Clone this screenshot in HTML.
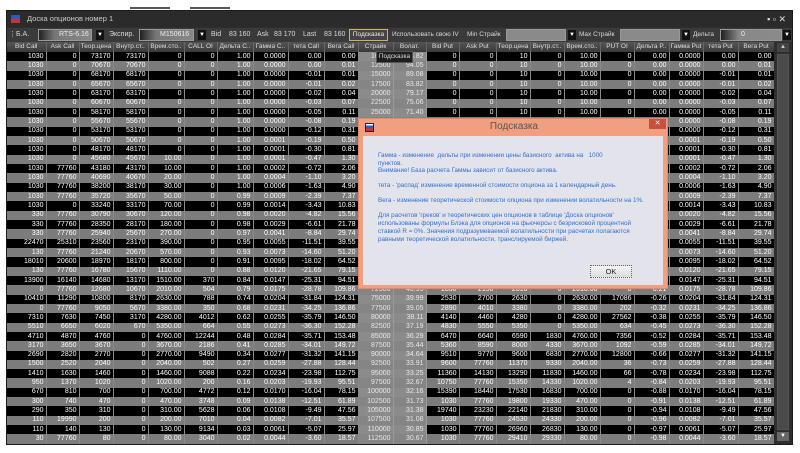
<!DOCTYPE html>
<html><head><meta charset="utf-8">
<style>
*{margin:0;padding:0;box-sizing:border-box}
body{width:800px;height:453px;background:#fff;position:relative;overflow:hidden;font-family:"Liberation Sans","DejaVu Sans",sans-serif}
#win{position:absolute;left:6px;top:10px;width:787px;height:435px;background:#2e2e2e;border:1px solid #1a1a1a}
.abs{position:absolute}
#title{left:0;top:0;width:785px;height:16px;background:#2b2b2b;color:#ccc;font-size:7.5px;line-height:16px;padding-left:20px}
#tb{left:0;top:17px;width:785px;height:14px;background:#3a3a3a;color:#d8d8d8;font-size:7px;line-height:14px}
.lbl{position:absolute;top:0;white-space:nowrap}
.combo{position:absolute;top:1px;height:12px;background:linear-gradient(90deg,#222,#777 30%,#888);border:1px solid #999;color:#eee;font-size:7px;line-height:10px;padding-left:20px}
.arr{position:absolute;top:2px;width:8px;height:10px;background:#111;color:#fff;font-size:6px;line-height:10px;text-align:center}
table{position:absolute;left:0;top:31px;border-collapse:collapse;table-layout:fixed;width:767px}
tr{height:9.33px}
tr.h{height:10px}
th{height:10px;padding:0;background:linear-gradient(#555,#3a3a3a);color:#ddd;font-weight:normal;font-size:6.5px;line-height:8px;border-right:1px solid #666;overflow:hidden;white-space:nowrap;text-align:center}
td{height:9.33px;max-height:9.33px;font-size:7px;line-height:8px;text-align:right;padding:0 2px 0 0;color:#fff;border-right:1px solid #8a8a8a;overflow:hidden;white-space:nowrap}
tr.b td{background:#000}
tr.g td{background:#7c7c7c}
tr td.s{background:#8b8b8b;color:#e8e8e8;border-right:1px solid #9a9a9a}
tr.g td.s{background:#858585}
#sb{left:767px;top:31px;width:18px;height:402px;background:#2e2e2e}
#dlg{position:absolute;left:358px;top:118px;width:310px;height:171px;background:#f0a080;border:1px solid #e08a6a}
#dlgin{position:absolute;left:4px;top:17px;width:300px;height:149px;background:#e3e3eb}
#dlg p{position:absolute;left:15px;color:#2e6fd0;font-size:6.3px;line-height:8px;white-space:nowrap}
</style></head><body>
<div style="position:absolute;left:130px;top:7px;width:40px;height:2px;background:#555"></div>
<div style="position:absolute;left:190px;top:7px;width:40px;height:2px;background:#555"></div>
<div id="win">
 <div id="title" class="abs"><span style="position:absolute;left:4px;top:4px;width:9px;height:8px;background:linear-gradient(#2a5acc 50%,#d03030 50%)"></span>Доска опционов номер 1<span style="position:absolute;right:6px;top:0;color:#ddd;font-size:9px">▪ ▫ ✕</span></div>
 <div id="tb" class="abs">
  <span class="lbl" style="left:2px">⋮</span>
  <span class="lbl" style="left:9px">Б.А.</span>
  <div class="combo" style="left:31px;width:54px">RTS-6.16</div><div class="arr" style="left:89px">▼</div>
  <span class="lbl" style="left:102px">Экспир.</span>
  <div class="combo" style="left:132px;width:55px">M150616</div><div class="arr" style="left:191px">▼</div>
  <span class="lbl" style="left:204px">Bid</span><span class="lbl" style="left:222px">83 160</span>
  <span class="lbl" style="left:250px">Ask</span><span class="lbl" style="left:267px">83 170</span>
  <span class="lbl" style="left:296px">Last</span><span class="lbl" style="left:317px">83 160</span>
  <div class="abs" style="left:342px;top:1px;width:39px;height:12px;border:1px solid #d4b060;background:#444;color:#eed;font-size:6.5px;line-height:10px;text-align:center">Подсказка</div>
  <span class="lbl" style="left:385px;font-size:6.5px">Использовать свою IV</span>
  <span class="lbl" style="left:460px;font-size:6.5px">Min Страйк</span>
  <div class="combo" style="left:499px;width:60px;background:#8a8a8a"></div><div class="arr" style="left:561px">▼</div>
  <span class="lbl" style="left:572px;font-size:6.5px">Max Страйк</span>
  <div class="combo" style="left:613px;width:60px;background:#8a8a8a"></div><div class="arr" style="left:675px">▼</div>
  <span class="lbl" style="left:686px;font-size:6.5px">Дельта</span>
  <div class="combo" style="left:713px;width:62px;background:linear-gradient(90deg,#222,#888 30%,#8a8a8a)">0</div><div class="arr" style="left:776px">▼</div>
 </div>
 <table>
 <colgroup><col style="width:39px"><col style="width:33px"><col style="width:34px"><col style="width:35px"><col style="width:36px"><col style="width:33px"><col style="width:36px"><col style="width:35px"><col style="width:36px"><col style="width:34px"><col style="width:35px"><col style="width:33px"><col style="width:33px"><col style="width:37px"><col style="width:34px"><col style="width:34px"><col style="width:36px"><col style="width:34px"><col style="width:35px"><col style="width:34px"><col style="width:35px"><col style="width:36px"></colgroup>
 <tr class="h"><th>Bid Call</th><th>Ask Call</th><th>Теор.цена</th><th>Внутр.ст..</th><th>Врем.сто..</th><th>CALL OI</th><th>Дельта C..</th><th>Гамма C..</th><th>тета Call</th><th>Вега Call</th><th>Страйк</th><th>Волат.</th><th>Bid Put</th><th>Ask Put</th><th>Теор.цена</th><th>Внутр.ст..</th><th>Врем.сто..</th><th>PUT OI</th><th>Дельта P..</th><th>Гамма Put</th><th>тета Put</th><th>Вега Put</th></tr>
 <tr class="b"><td>1030</td><td>0</td><td>73170</td><td>73170</td><td>0</td><td>0</td><td>1.00</td><td>0.0000</td><td>0.00</td><td>0.00</td><td class="s">10000</td><td class="s">93.82</td><td>0</td><td>0</td><td>10</td><td>0</td><td>10.00</td><td>0</td><td>0.00</td><td>0.0000</td><td>0.00</td><td>0.00</td></tr>
 <tr class="g"><td>1030</td><td>0</td><td>70670</td><td>70670</td><td>0</td><td>0</td><td>1.00</td><td>0.0000</td><td>0.00</td><td>0.01</td><td class="s">12500</td><td class="s">94.05</td><td>0</td><td>0</td><td>10</td><td>0</td><td>10.00</td><td>0</td><td>0.00</td><td>0.0000</td><td>0.00</td><td>0.01</td></tr>
 <tr class="b"><td>1030</td><td>0</td><td>68170</td><td>68170</td><td>0</td><td>0</td><td>1.00</td><td>0.0000</td><td>-0.01</td><td>0.01</td><td class="s">15000</td><td class="s">89.08</td><td>0</td><td>0</td><td>10</td><td>0</td><td>10.00</td><td>0</td><td>0.00</td><td>0.0000</td><td>-0.01</td><td>0.01</td></tr>
 <tr class="g"><td>1030</td><td>0</td><td>65670</td><td>65670</td><td>0</td><td>0</td><td>1.00</td><td>0.0000</td><td>-0.01</td><td>0.02</td><td class="s">17500</td><td class="s">83.82</td><td>0</td><td>0</td><td>10</td><td>0</td><td>10.00</td><td>0</td><td>0.00</td><td>0.0000</td><td>-0.01</td><td>0.02</td></tr>
 <tr class="b"><td>1030</td><td>0</td><td>63170</td><td>63170</td><td>0</td><td>0</td><td>1.00</td><td>0.0000</td><td>-0.02</td><td>0.04</td><td class="s">20000</td><td class="s">79.17</td><td>0</td><td>0</td><td>10</td><td>0</td><td>10.00</td><td>0</td><td>0.00</td><td>0.0000</td><td>-0.02</td><td>0.04</td></tr>
 <tr class="g"><td>1030</td><td>0</td><td>60670</td><td>60670</td><td>0</td><td>0</td><td>1.00</td><td>0.0000</td><td>-0.03</td><td>0.07</td><td class="s">22500</td><td class="s">75.06</td><td>0</td><td>0</td><td>10</td><td>0</td><td>10.00</td><td>0</td><td>0.00</td><td>0.0000</td><td>-0.03</td><td>0.07</td></tr>
 <tr class="b"><td>1030</td><td>0</td><td>58170</td><td>58170</td><td>0</td><td>0</td><td>1.00</td><td>0.0000</td><td>-0.05</td><td>0.11</td><td class="s">25000</td><td class="s">71.40</td><td>0</td><td>0</td><td>10</td><td>0</td><td>10.00</td><td>0</td><td>0.00</td><td>0.0000</td><td>-0.05</td><td>0.11</td></tr>
 <tr class="g"><td>1030</td><td>0</td><td>55670</td><td>55670</td><td>0</td><td>0</td><td>1.00</td><td>0.0000</td><td>-0.08</td><td>0.19</td><td class="s">27500</td><td class="s">68.20</td><td>0</td><td>0</td><td>10</td><td>0</td><td>10.00</td><td>0</td><td>0.00</td><td>0.0000</td><td>-0.08</td><td>0.19</td></tr>
 <tr class="b"><td>1030</td><td>0</td><td>53170</td><td>53170</td><td>0</td><td>0</td><td>1.00</td><td>0.0000</td><td>-0.12</td><td>0.31</td><td class="s">30000</td><td class="s">65.30</td><td>0</td><td>0</td><td>10</td><td>0</td><td>10.00</td><td>0</td><td>0.00</td><td>0.0000</td><td>-0.12</td><td>0.31</td></tr>
 <tr class="g"><td>1030</td><td>0</td><td>50670</td><td>50670</td><td>0</td><td>0</td><td>1.00</td><td>0.0001</td><td>-0.19</td><td>0.50</td><td class="s">32500</td><td class="s">62.60</td><td>0</td><td>0</td><td>10</td><td>0</td><td>10.00</td><td>0</td><td>0.00</td><td>0.0001</td><td>-0.19</td><td>0.50</td></tr>
 <tr class="b"><td>1030</td><td>0</td><td>48170</td><td>48170</td><td>0</td><td>0</td><td>1.00</td><td>0.0001</td><td>-0.30</td><td>0.81</td><td class="s">35000</td><td class="s">60.20</td><td>0</td><td>0</td><td>10</td><td>0</td><td>10.00</td><td>0</td><td>0.00</td><td>0.0001</td><td>-0.30</td><td>0.81</td></tr>
 <tr class="g"><td>1030</td><td>0</td><td>45680</td><td>45670</td><td>10.00</td><td>0</td><td>1.00</td><td>0.0001</td><td>-0.47</td><td>1.30</td><td class="s">37500</td><td class="s">58.00</td><td>0</td><td>0</td><td>10</td><td>0</td><td>10.00</td><td>0</td><td>0.00</td><td>0.0001</td><td>-0.47</td><td>1.30</td></tr>
 <tr class="b"><td>1030</td><td>77760</td><td>43180</td><td>43170</td><td>10.00</td><td>0</td><td>1.00</td><td>0.0002</td><td>-0.72</td><td>2.06</td><td class="s">40000</td><td class="s">56.00</td><td>0</td><td>0</td><td>10</td><td>0</td><td>10.00</td><td>0</td><td>0.00</td><td>0.0002</td><td>-0.72</td><td>2.06</td></tr>
 <tr class="g"><td>1030</td><td>77760</td><td>40690</td><td>40670</td><td>20.00</td><td>0</td><td>1.00</td><td>0.0004</td><td>-1.10</td><td>3.20</td><td class="s">42500</td><td class="s">54.10</td><td>0</td><td>0</td><td>20</td><td>0</td><td>20.00</td><td>0</td><td>0.00</td><td>0.0004</td><td>-1.10</td><td>3.20</td></tr>
 <tr class="b"><td>1030</td><td>77760</td><td>38200</td><td>38170</td><td>30.00</td><td>0</td><td>1.00</td><td>0.0006</td><td>-1.63</td><td>4.90</td><td class="s">45000</td><td class="s">52.40</td><td>0</td><td>0</td><td>30</td><td>0</td><td>30.00</td><td>0</td><td>0.00</td><td>0.0006</td><td>-1.63</td><td>4.90</td></tr>
 <tr class="g"><td>1030</td><td>77760</td><td>35720</td><td>35670</td><td>50.00</td><td>0</td><td>0.99</td><td>0.0009</td><td>-2.39</td><td>7.37</td><td class="s">47500</td><td class="s">50.80</td><td>0</td><td>0</td><td>50</td><td>0</td><td>50.00</td><td>0</td><td>-0.01</td><td>0.0009</td><td>-2.39</td><td>7.37</td></tr>
 <tr class="b"><td>1030</td><td>0</td><td>33240</td><td>33170</td><td>70.00</td><td>0</td><td>0.99</td><td>0.0014</td><td>-3.43</td><td>10.83</td><td class="s">50000</td><td class="s">49.30</td><td>0</td><td>0</td><td>70</td><td>0</td><td>70.00</td><td>0</td><td>-0.01</td><td>0.0014</td><td>-3.43</td><td>10.83</td></tr>
 <tr class="g"><td>330</td><td>77760</td><td>30790</td><td>30670</td><td>120.00</td><td>0</td><td>0.98</td><td>0.0020</td><td>-4.82</td><td>15.56</td><td class="s">52500</td><td class="s">47.90</td><td>0</td><td>0</td><td>120</td><td>0</td><td>120.00</td><td>0</td><td>-0.02</td><td>0.0020</td><td>-4.82</td><td>15.56</td></tr>
 <tr class="b"><td>330</td><td>77760</td><td>28350</td><td>28170</td><td>180.00</td><td>0</td><td>0.98</td><td>0.0029</td><td>-6.61</td><td>21.78</td><td class="s">55000</td><td class="s">46.60</td><td>0</td><td>0</td><td>180</td><td>0</td><td>180.00</td><td>0</td><td>-0.02</td><td>0.0029</td><td>-6.61</td><td>21.78</td></tr>
 <tr class="g"><td>330</td><td>77760</td><td>25940</td><td>25670</td><td>270.00</td><td>0</td><td>0.97</td><td>0.0041</td><td>-8.84</td><td>29.74</td><td class="s">57500</td><td class="s">45.40</td><td>0</td><td>0</td><td>270</td><td>0</td><td>270.00</td><td>0</td><td>-0.03</td><td>0.0041</td><td>-8.84</td><td>29.74</td></tr>
 <tr class="b"><td>22470</td><td>25310</td><td>23560</td><td>23170</td><td>390.00</td><td>0</td><td>0.95</td><td>0.0055</td><td>-11.51</td><td>39.55</td><td class="s">60000</td><td class="s">44.20</td><td>0</td><td>0</td><td>390</td><td>0</td><td>390.00</td><td>0</td><td>-0.05</td><td>0.0055</td><td>-11.51</td><td>39.55</td></tr>
 <tr class="g"><td>130</td><td>77760</td><td>21240</td><td>20670</td><td>570.00</td><td>0</td><td>0.93</td><td>0.0073</td><td>-14.60</td><td>51.20</td><td class="s">62500</td><td class="s">43.10</td><td>0</td><td>0</td><td>570</td><td>0</td><td>570.00</td><td>0</td><td>-0.07</td><td>0.0073</td><td>-14.60</td><td>51.20</td></tr>
 <tr class="b"><td>18010</td><td>20600</td><td>18970</td><td>18170</td><td>800.00</td><td>0</td><td>0.91</td><td>0.0095</td><td>-18.02</td><td>64.52</td><td class="s">65000</td><td class="s">42.00</td><td>0</td><td>0</td><td>800</td><td>0</td><td>800.00</td><td>0</td><td>-0.09</td><td>0.0095</td><td>-18.02</td><td>64.52</td></tr>
 <tr class="g"><td>130</td><td>77760</td><td>16780</td><td>15670</td><td>1110.00</td><td>0</td><td>0.88</td><td>0.0120</td><td>-21.65</td><td>79.15</td><td class="s">67500</td><td class="s">41.00</td><td>0</td><td>0</td><td>1110</td><td>0</td><td>1110.00</td><td>0</td><td>-0.12</td><td>0.0120</td><td>-21.65</td><td>79.15</td></tr>
 <tr class="b"><td>13900</td><td>16140</td><td>14680</td><td>13170</td><td>1510.00</td><td>370</td><td>0.84</td><td>0.0147</td><td>-25.31</td><td>94.51</td><td class="s">70000</td><td class="s">40.00</td><td>0</td><td>0</td><td>1510</td><td>0</td><td>1510.00</td><td>0</td><td>-0.16</td><td>0.0147</td><td>-25.31</td><td>94.51</td></tr>
 <tr class="g"><td>0</td><td>77760</td><td>12680</td><td>10670</td><td>2010.00</td><td>504</td><td>0.79</td><td>0.0175</td><td>-28.78</td><td>109.86</td><td class="s">72500</td><td class="s">40.95</td><td>1830</td><td>2150</td><td>2010</td><td>0</td><td>2010.00</td><td>0</td><td>-0.21</td><td>0.0175</td><td>-28.78</td><td>109.86</td></tr>
 <tr class="b"><td>10410</td><td>11290</td><td>10800</td><td>8170</td><td>2630.00</td><td>788</td><td>0.74</td><td>0.0204</td><td>-31.84</td><td>124.31</td><td class="s">75000</td><td class="s">39.99</td><td>2530</td><td>2700</td><td>2630</td><td>0</td><td>2630.00</td><td>17086</td><td>-0.26</td><td>0.0204</td><td>-31.84</td><td>124.31</td></tr>
 <tr class="g"><td>0</td><td>77760</td><td>9050</td><td>5670</td><td>3380.00</td><td>350</td><td>0.68</td><td>0.0231</td><td>-34.25</td><td>136.86</td><td class="s">77500</td><td class="s">39.05</td><td>2890</td><td>4010</td><td>3380</td><td>0</td><td>3380.00</td><td>202</td><td>-0.32</td><td>0.0231</td><td>-34.25</td><td>136.86</td></tr>
 <tr class="b"><td>7310</td><td>7630</td><td>7450</td><td>3170</td><td>4280.00</td><td>4012</td><td>0.62</td><td>0.0255</td><td>-35.79</td><td>146.50</td><td class="s">80000</td><td class="s">38.11</td><td>4140</td><td>4460</td><td>4280</td><td>0</td><td>4280.00</td><td>27562</td><td>-0.38</td><td>0.0255</td><td>-35.79</td><td>146.50</td></tr>
 <tr class="g"><td>5510</td><td>6650</td><td>6020</td><td>670</td><td>5350.00</td><td>664</td><td>0.55</td><td>0.0273</td><td>-36.30</td><td>152.28</td><td class="s">82500</td><td class="s">37.19</td><td>4830</td><td>5550</td><td>5350</td><td>0</td><td>5350.00</td><td>634</td><td>-0.45</td><td>0.0273</td><td>-36.30</td><td>152.28</td></tr>
 <tr class="b"><td>4710</td><td>4870</td><td>4760</td><td>0</td><td>4760.00</td><td>12244</td><td>0.48</td><td>0.0284</td><td>-35.71</td><td>153.48</td><td class="s">85000</td><td class="s">36.29</td><td>6470</td><td>6640</td><td>6590</td><td>1830</td><td>4760.00</td><td>7356</td><td>-0.52</td><td>0.0284</td><td>-35.71</td><td>153.48</td></tr>
 <tr class="g"><td>3170</td><td>3650</td><td>3670</td><td>0</td><td>3670.00</td><td>2186</td><td>0.41</td><td>0.0285</td><td>-34.01</td><td>149.72</td><td class="s">87500</td><td class="s">35.44</td><td>5360</td><td>8590</td><td>8000</td><td>4330</td><td>3670.00</td><td>1092</td><td>-0.59</td><td>0.0285</td><td>-34.01</td><td>149.72</td></tr>
 <tr class="b"><td>2690</td><td>2820</td><td>2770</td><td>0</td><td>2770.00</td><td>9490</td><td>0.34</td><td>0.0277</td><td>-31.32</td><td>141.15</td><td class="s">90000</td><td class="s">34.64</td><td>9510</td><td>9770</td><td>9600</td><td>6830</td><td>2770.00</td><td>12800</td><td>-0.66</td><td>0.0277</td><td>-31.32</td><td>141.15</td></tr>
 <tr class="g"><td>1500</td><td>2520</td><td>2040</td><td>0</td><td>2040.00</td><td>502</td><td>0.27</td><td>0.0259</td><td>-27.88</td><td>128.44</td><td class="s">92500</td><td class="s">33.91</td><td>9600</td><td>77760</td><td>11370</td><td>9330</td><td>2040.00</td><td>36</td><td>-0.73</td><td>0.0259</td><td>-27.88</td><td>128.44</td></tr>
 <tr class="b"><td>1410</td><td>1630</td><td>1460</td><td>0</td><td>1460.00</td><td>9088</td><td>0.22</td><td>0.0234</td><td>-23.98</td><td>112.75</td><td class="s">95000</td><td class="s">33.25</td><td>11360</td><td>14130</td><td>13290</td><td>11830</td><td>1460.00</td><td>66</td><td>-0.78</td><td>0.0234</td><td>-23.98</td><td>112.75</td></tr>
 <tr class="g"><td>950</td><td>1370</td><td>1020</td><td>0</td><td>1020.00</td><td>200</td><td>0.16</td><td>0.0203</td><td>-19.93</td><td>95.51</td><td class="s">97500</td><td class="s">32.67</td><td>10750</td><td>77760</td><td>15350</td><td>14330</td><td>1020.00</td><td>4</td><td>-0.84</td><td>0.0203</td><td>-19.93</td><td>95.51</td></tr>
 <tr class="b"><td>670</td><td>810</td><td>700</td><td>0</td><td>700.00</td><td>4772</td><td>0.12</td><td>0.0170</td><td>-16.04</td><td>78.15</td><td class="s">100000</td><td class="s">32.16</td><td>15390</td><td>18440</td><td>17530</td><td>16830</td><td>700.00</td><td>0</td><td>-0.88</td><td>0.0170</td><td>-16.04</td><td>78.15</td></tr>
 <tr class="g"><td>300</td><td>740</td><td>470</td><td>0</td><td>470.00</td><td>3748</td><td>0.09</td><td>0.0138</td><td>-12.51</td><td>61.89</td><td class="s">102500</td><td class="s">31.73</td><td>1030</td><td>77760</td><td>19800</td><td>19330</td><td>470.00</td><td>0</td><td>-0.91</td><td>0.0138</td><td>-12.51</td><td>61.89</td></tr>
 <tr class="b"><td>290</td><td>350</td><td>310</td><td>0</td><td>310.00</td><td>5628</td><td>0.06</td><td>0.0108</td><td>-9.49</td><td>47.56</td><td class="s">105000</td><td class="s">31.38</td><td>19740</td><td>23230</td><td>22140</td><td>21830</td><td>310.00</td><td>0</td><td>-0.94</td><td>0.0108</td><td>-9.49</td><td>47.56</td></tr>
 <tr class="g"><td>110</td><td>19990</td><td>200</td><td>0</td><td>200.00</td><td>7010</td><td>0.04</td><td>0.0082</td><td>-7.01</td><td>35.57</td><td class="s">107500</td><td class="s">31.08</td><td>1030</td><td>77760</td><td>24530</td><td>24330</td><td>200.00</td><td>0</td><td>-0.96</td><td>0.0082</td><td>-7.01</td><td>35.57</td></tr>
 <tr class="b"><td>110</td><td>140</td><td>130</td><td>0</td><td>130.00</td><td>9134</td><td>0.03</td><td>0.0061</td><td>-5.07</td><td>25.97</td><td class="s">110000</td><td class="s">30.85</td><td>1030</td><td>77760</td><td>26960</td><td>26830</td><td>130.00</td><td>0</td><td>-0.97</td><td>0.0061</td><td>-5.07</td><td>25.97</td></tr>
 <tr class="g"><td>30</td><td>77760</td><td>80</td><td>0</td><td>80.00</td><td>3040</td><td>0.02</td><td>0.0044</td><td>-3.60</td><td>18.57</td><td class="s">112500</td><td class="s">30.67</td><td>1030</td><td>77760</td><td>29410</td><td>29330</td><td>80.00</td><td>0</td><td>-0.98</td><td>0.0044</td><td>-3.60</td><td>18.57</td></tr>
 </table>
 <div id="sb" class="abs">
  <div class="abs" style="left:3px;top:1px;width:12px;height:9px;background:#444;color:#ccc;font-size:6px;text-align:center;line-height:9px">▲</div>
  <div class="abs" style="left:3px;top:12px;width:12px;height:376px;background:#4a4a4a;border:1px solid #555"></div>
  <div class="abs" style="left:3px;top:390px;width:12px;height:9px;background:#666;color:#fff;font-size:6px;text-align:center;line-height:9px">▼</div>
 </div>
</div>
<div class="abs" style="left:376px;top:51px;width:37px;height:12px;background:#1e1e1e;border:1px solid #555;color:#ddd;font-size:6.5px;line-height:10px;text-align:center">Подсказка</div>
<div id="dlg">
 <span class="abs" style="left:6px;top:4px;width:9px;height:9px;background:linear-gradient(#fff 20%,#2a5acc 20%,#2a5acc 55%,#d03030 55%);border:1px solid #224"></span>
 <div class="abs" style="left:0;top:2px;width:310px;text-align:center;color:#555;font-size:10px">Подсказка</div>
 <div class="abs" style="left:290px;top:0;width:17px;height:10px;background:#c85040;color:#fff;font-size:7px;line-height:10px;text-align:center">✕</div>
 <div id="dlgin">
  <p style="top:16px">Гамма - изменение&nbsp; дельты при изменении цены базисного&nbsp; актива на&nbsp;&nbsp; 1000</p>
  <p style="top:24px">пунктов.</p>
  <p style="top:31px">Внимание! База расчета Гаммы зависит от базисного актива.</p>
  <p style="top:46px">тета - 'распад' изменение временной стоимости опциона за 1 календарный день.</p>
  <p style="top:61px">Вега - изменение теоретической стоимости опциона при изменении волатильности на 1%.</p>
  <p style="top:76px">Для расчетов 'греков' и теоретических цен опционов в таблице 'Доска опционов'</p>
  <p style="top:84px">использованы формулы Блэка для опционов на фьючерсы с безрисковой процентной</p>
  <p style="top:92px">ставкой R = 0%. Значения подразумеваемой волатильности при расчетах полагаются</p>
  <p style="top:100px">равными теоретической волатильности, транслируемой биржей.</p>
  <div class="abs" style="left:227px;top:129px;width:42px;height:13px;background:linear-gradient(#f4f4f4,#dcdcdc);border:1px dotted #666;color:#222;font-size:7.5px;line-height:11px;text-align:center">OK</div>
 </div>
</div>
</body></html>
